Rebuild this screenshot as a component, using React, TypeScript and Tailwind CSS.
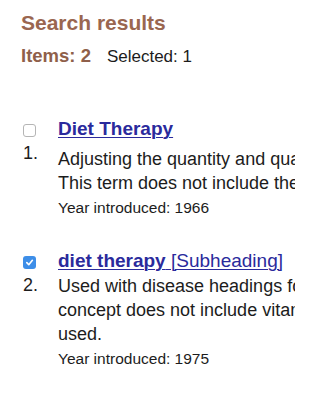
import React from "react";

type Item = {
  n: number;
  checked: boolean;
  title: string;
  sub?: string;
  lines: string[];
  year: string;
  bodyGap: string;
};

const items: Item[] = [
  {
    n: 1,
    checked: false,
    title: "Diet Therapy",
    lines: [
      "Adjusting the quantity and quality of food intake to improve health status of an individual.",
      "This term does not include the methods of food intake (NUTRITIONAL SUPPORT).",
    ],
    year: "Year introduced: 1966",
    bodyGap: "mt-[7px]",
  },
  {
    n: 2,
    checked: true,
    title: "diet therapy",
    sub: "[Subheading]",
    lines: [
      "Used with disease headings for dietary and nutritional management of the disease. The",
      "concept does not include vitamin or mineral supplements taken to control or prevent a disease, for which drug therapy is",
      "used.",
    ],
    year: "Year introduced: 1975",
    bodyGap: "mt-[2px]",
  },
];

function Checkbox({ checked }: { checked: boolean }) {
  if (checked) {
    return (
      <div className="w-[13px] h-[13px] rounded-[3px] bg-[#3d8ee8] flex items-center justify-center">
        <svg width="9" height="9" viewBox="0 0 10 10" fill="none">
          <path d="M2 5.2 L4.2 7.4 L8.2 2.6" stroke="white" strokeWidth="1.8" strokeLinecap="round" strokeLinejoin="round" />
        </svg>
      </div>
    );
  }
  return <div className="w-[13px] h-[13px] rounded-[3px] border border-[#b5b5b5] bg-white" />;
}

export default function App() {
  return (
    <div
      className="w-[295px] h-[400px] overflow-hidden bg-white text-[#1c1c1c]"
      style={{ fontFamily: '"Liberation Sans", Arial, sans-serif' }}
    >
      <div className="pl-[21px] pt-[11px]">
        <h2 className="text-[21px] leading-[24px] font-bold text-[#9a6650] whitespace-nowrap">Search results</h2>
        <div className="mt-[10px] flex items-baseline whitespace-nowrap">
          <span className="text-[18.5px] leading-[22px] font-bold text-[#8f5f4a]">Items: 2</span>
          <span className="ml-[16px] text-[17px] leading-[22px] text-[#1c1c1c]">Selected: 1</span>
        </div>
      </div>

      <div className="mt-[50px] flex flex-col gap-[31px]">
        {items.map((it) => (
          <div key={it.n} className="flex">
            <div className="w-[58px] shrink-0 pl-[23px] flex flex-col">
              <div className="mt-[6px]">
                <Checkbox checked={it.checked} />
              </div>
              <div className="mt-[6px] text-[18px] leading-[20px]">{it.n}.</div>
            </div>
            <div className="flex flex-col whitespace-nowrap">
              <div className="text-[19px] leading-[22px] text-[#2a2a9c] underline decoration-1 underline-offset-[2px]">
                <span className="font-bold">{it.title}</span>
                {it.sub && <span> {it.sub}</span>}
              </div>
              <div className={`${it.bodyGap} text-[18px] leading-[24px]`}>
                {it.lines.map((l, i) => (
                  <div key={i}>{l}</div>
                ))}
              </div>
              <div className="mt-[2px] text-[15.5px] leading-[22px]">{it.year}</div>
            </div>
          </div>
        ))}
      </div>
    </div>
  );
}
